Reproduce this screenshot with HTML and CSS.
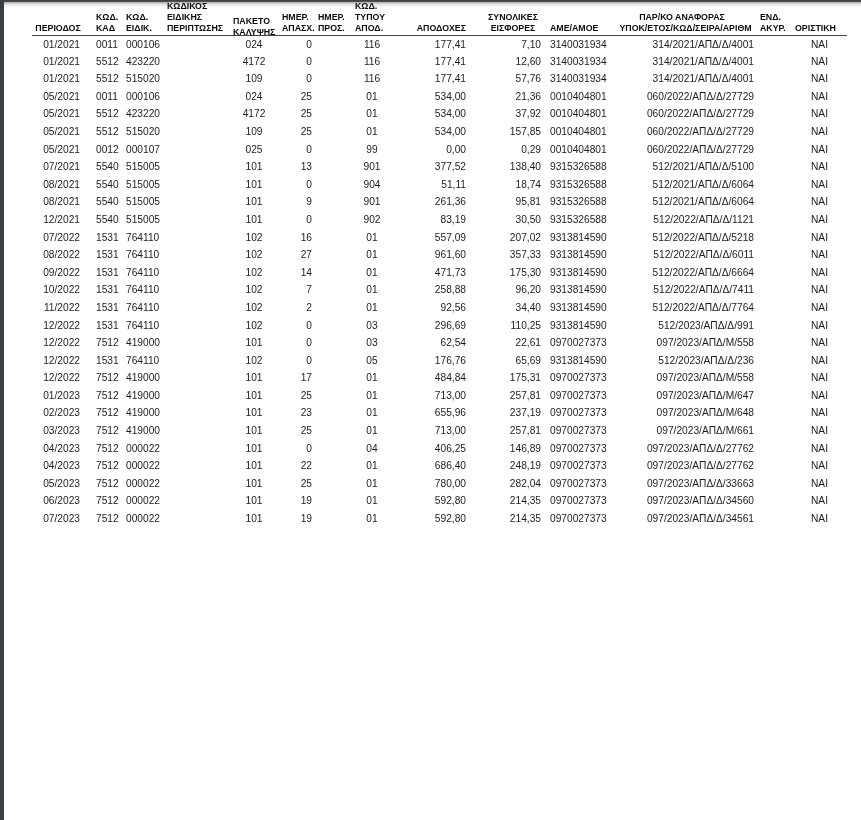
FILE: index.html
```html
<!DOCTYPE html>
<html lang="el">
<head>
<meta charset="utf-8">
<title>Αναλυτική κατάσταση</title>
<link rel="stylesheet" href="styles.css">
</head>
<body>
<main class="page">
<table class="records">
<colgroup>
<col class="c1"><col class="c2"><col class="c3"><col class="c4"><col class="c5"><col class="c6"><col class="c7"><col class="c8"><col class="c9"><col class="c10"><col class="c11"><col class="c12"><col class="c13"><col class="c14">
</colgroup>
<thead>
<tr>
<th class="per">ΠΕΡΙΟΔΟΣ</th>
<th class="kad">ΚΩΔ.<br>ΚΑΔ</th>
<th class="eid">ΚΩΔ.<br>ΕΙΔΙΚ.</th>
<th class="eper">ΚΩΔΙΚΟΣ<br>ΕΙΔΙΚΗΣ<br>ΠΕΡΙΠΤΩΣΗΣ</th>
<th class="pak"><span class="low">ΠΑΚΕΤΟ<br>ΚΑΛΥΨΗΣ</span></th>
<th class="hm">ΗΜΕΡ.<br>ΑΠΑΣΧ.</th>
<th class="pros">ΗΜΕΡ.<br>ΠΡΟΣ.</th>
<th class="typ">ΚΩΔ.<br>ΤΥΠΟΥ<br>ΑΠΟΔ.</th>
<th class="apo">ΑΠΟΔΟΧΕΣ</th>
<th class="eis">ΣΥΝΟΛΙΚΕΣ<br>ΕΙΣΦΟΡΕΣ</th>
<th class="ame">ΑΜΕ/ΑΜΟΕ</th>
<th class="par"><span class="par-top">ΠΑΡ/ΚΟ ΑΝΑΦΟΡΑΣ</span>ΥΠΟΚ/ΕΤΟΣ/ΚΩΔ/ΣΕΙΡΑ/ΑΡΙΘΜ</th>
<th class="end">ΕΝΔ.<br>ΑΚΥΡ.</th>
<th class="ori">ΟΡΙΣΤΙΚΗ</th>
</tr>
</thead>
<tbody id="rows"></tbody>
</table>
</main>
<script src="app.js"></script>
</body>
</html>
```
FILE: styles.css
```css
* { box-sizing: border-box; }
html, body { margin: 0; height: 100%; background: #fff; overflow: hidden; }
body { font-family: "Liberation Sans", Arial, sans-serif; color: #1a1a1a; }
.page {
  height: 820px;
  padding: 1px 14px 0 28px;
  border-left: 4px solid #3c3f41;
  background: linear-gradient(to bottom, #3c3f41 0, #4a4c4e 1.5px, #b8b8b8 2.5px, #e6e6e6 4.5px, #f6f6f6 6.5px, #fff 9px) no-repeat;
}
.records { border-collapse: collapse; table-layout: fixed; width: 815px; filter: blur(0.25px); }
.c1 { width: 58px; } .c2 { width: 34px; } .c3 { width: 40px; } .c4 { width: 65px; }
.c5 { width: 50px; } .c6 { width: 37px; } .c7 { width: 36px; } .c8 { width: 40px; }
.c9 { width: 78px; } .c10 { width: 75px; } .c11 { width: 70px; } .c12 { width: 143px; }
.c13 { width: 34px; } .c14 { width: 55px; }
th {
  font-size: 8.8px; line-height: 11px; font-weight: 700; text-align: left;
  vertical-align: bottom; padding: 0 0 1px; white-space: nowrap; color: #0c0c10;
  border-bottom: 1.5px solid #444;
}
td {
  font-size: 10.2px; height: 17.6px; padding: 2.5px 0 0; white-space: nowrap;
  line-height: 12px; color: #1c1c22; vertical-align: top;
}
th.per { text-align: center; padding-right: 6px; }
th.kad { padding-left: 6px; }
th.eid { padding-left: 2px; }
th.eper { padding-left: 3px; }
th.pak { padding-left: 4px; }
.low { display: block; margin-bottom: -4px; }
th.hm { padding-left: 3px; }
th.pros { padding-left: 2px; }
th.typ { padding-left: 3px; }
th.apo { text-align: right; padding-right: 4px; }
th.eis { text-align: center; padding-left: 11px; }
th.ame { padding-left: 5px; }
th.par { text-align: center; padding-right: 2px; }
.par-top { display: block; padding-right: 7px; }
th.end { padding-left: 2px; }
th.ori { padding-left: 3px; }
td.per { text-align: right; padding-right: 10px; }
td.kad { padding-left: 6px; }
td.eid { padding-left: 2px; }
td.pak, td.typ, td.ori { text-align: center; }
td.hm, td.apo, td.eis, td.par { text-align: right; padding-right: 4px; }
td.ame { padding-left: 5px; }
```
FILE: app.js
```js
const data = `01/2021|0011|000106|024|0|116|177,41|7,10|3140031934|314/2021/ΑΠΔ/Δ/4001
01/2021|5512|423220|4172|0|116|177,41|12,60|3140031934|314/2021/ΑΠΔ/Δ/4001
01/2021|5512|515020|109|0|116|177,41|57,76|3140031934|314/2021/ΑΠΔ/Δ/4001
05/2021|0011|000106|024|25|01|534,00|21,36|0010404801|060/2022/ΑΠΔ/Δ/27729
05/2021|5512|423220|4172|25|01|534,00|37,92|0010404801|060/2022/ΑΠΔ/Δ/27729
05/2021|5512|515020|109|25|01|534,00|157,85|0010404801|060/2022/ΑΠΔ/Δ/27729
05/2021|0012|000107|025|0|99|0,00|0,29|0010404801|060/2022/ΑΠΔ/Δ/27729
07/2021|5540|515005|101|13|901|377,52|138,40|9315326588|512/2021/ΑΠΔ/Δ/5100
08/2021|5540|515005|101|0|904|51,11|18,74|9315326588|512/2021/ΑΠΔ/Δ/6064
08/2021|5540|515005|101|9|901|261,36|95,81|9315326588|512/2021/ΑΠΔ/Δ/6064
12/2021|5540|515005|101|0|902|83,19|30,50|9315326588|512/2022/ΑΠΔ/Δ/1121
07/2022|1531|764110|102|16|01|557,09|207,02|9313814590|512/2022/ΑΠΔ/Δ/5218
08/2022|1531|764110|102|27|01|961,60|357,33|9313814590|512/2022/ΑΠΔ/Δ/6011
09/2022|1531|764110|102|14|01|471,73|175,30|9313814590|512/2022/ΑΠΔ/Δ/6664
10/2022|1531|764110|102|7|01|258,88|96,20|9313814590|512/2022/ΑΠΔ/Δ/7411
11/2022|1531|764110|102|2|01|92,56|34,40|9313814590|512/2022/ΑΠΔ/Δ/7764
12/2022|1531|764110|102|0|03|296,69|110,25|9313814590|512/2023/ΑΠΔ/Δ/991
12/2022|7512|419000|101|0|03|62,54|22,61|0970027373|097/2023/ΑΠΔ/Μ/558
12/2022|1531|764110|102|0|05|176,76|65,69|9313814590|512/2023/ΑΠΔ/Δ/236
12/2022|7512|419000|101|17|01|484,84|175,31|0970027373|097/2023/ΑΠΔ/Μ/558
01/2023|7512|419000|101|25|01|713,00|257,81|0970027373|097/2023/ΑΠΔ/Μ/647
02/2023|7512|419000|101|23|01|655,96|237,19|0970027373|097/2023/ΑΠΔ/Μ/648
03/2023|7512|419000|101|25|01|713,00|257,81|0970027373|097/2023/ΑΠΔ/Μ/661
04/2023|7512|000022|101|0|04|406,25|146,89|0970027373|097/2023/ΑΠΔ/Δ/27762
04/2023|7512|000022|101|22|01|686,40|248,19|0970027373|097/2023/ΑΠΔ/Δ/27762
05/2023|7512|000022|101|25|01|780,00|282,04|0970027373|097/2023/ΑΠΔ/Δ/33663
06/2023|7512|000022|101|19|01|592,80|214,35|0970027373|097/2023/ΑΠΔ/Δ/34560
07/2023|7512|000022|101|19|01|592,80|214,35|0970027373|097/2023/ΑΠΔ/Δ/34561`;
const body = document.getElementById('rows');
const names = ['per','kad','eid','eper','pak','hm','pros','typ','apo','eis','ame','par','end','ori'];
data.split('\n').forEach(line => {
  const [per, kad, eid, pak, hm, typ, apo, eis, ame, par] = line.split('|');
  const values = [per, kad, eid, '', pak, hm, '', typ, apo, eis, ame, par, '', 'ΝΑΙ'];
  const tr = document.createElement('tr');
  values.forEach((t, i) => {
    const td = document.createElement('td');
    td.textContent = t;
    td.className = names[i];
    tr.appendChild(td);
  });
  body.appendChild(tr);
});
```
